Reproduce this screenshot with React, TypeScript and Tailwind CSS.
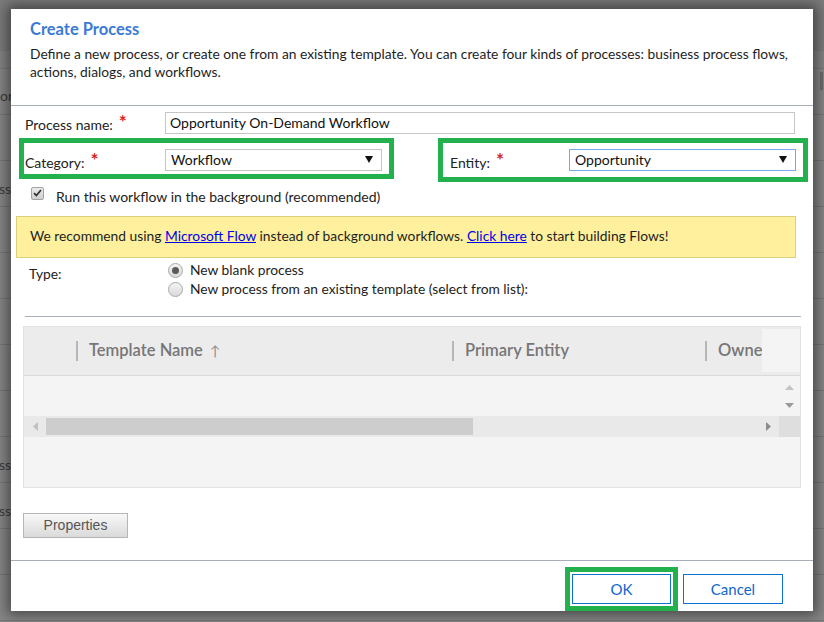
import React from 'react';

// Backdrop rows behind the modal (only the left/right edges show)
const backdropRows = [
  { text: '' },
  { text: 'ss' },
  { text: '' },
  { text: '' },
  { text: '' },
  { text: '' },
  { text: '' },
  { text: 'ss' },
  { text: 'ss' },
  { text: '' },
  { text: '' },
];

const Arrow: React.FC<{ dir: 'up' | 'down' | 'left' | 'right'; color: string; className?: string }> = ({ dir, color, className }) => {
  const pts = {
    up: '0,5 4.5,0 9,5',
    down: '0,0 9,0 4.5,5',
    left: '5,0 5,9 0,4.5',
    right: '0,0 5,4.5 0,9',
  }[dir];
  const vertical = dir === 'up' || dir === 'down';
  return (
    <svg width={vertical ? 9 : 5} height={vertical ? 5 : 9} viewBox={vertical ? '0 0 9 5' : '0 0 5 9'} className={className}>
      <polygon points={pts} fill={color} />
    </svg>
  );
};

const SelectBox: React.FC<{ value: string; width: string; focused?: boolean }> = ({ value, width, focused }) => (
  <div
    className={`${width} h-[22px] flex items-center justify-between pl-[5px] pr-[8px] border bg-white text-[14px] text-[#111] ${
      focused ? 'border-[#7aa7e8]' : 'border-[#c4c4c4]'
    }`}
  >
    <span>{value}</span>
    <svg width="8" height="7" viewBox="0 0 8 7">
      <polygon points="0,0 8,0 4,7" fill="#111" />
    </svg>
  </div>
);

const Required = () => (
  <span className="inline-block ml-[6px] mt-[1px] text-[19px] leading-[14px] align-top font-bold text-[#d42424]">*</span>
);

const Radio: React.FC<{ checked?: boolean }> = ({ checked }) => (
  <span className="w-[15px] h-[15px] rounded-full border border-[#a8a8a8] bg-gradient-to-b from-[#f4f4f4] to-[#d9d9d9] flex items-center justify-center">
    {checked && <span className="w-[7px] h-[7px] rounded-full bg-[#5a5a5a]" />}
  </span>
);

const GridColumn: React.FC<{ label: string; width: string; sortUp?: boolean }> = ({ label, width, sortUp }) => (
  <div className={`${width} flex items-center shrink-0`}>
    <span className="w-[2px] h-[20px] bg-[#b6b6b6]" />
    <span className="ml-[11px] text-[16.5px] font-semibold text-[#767676] whitespace-nowrap">
      {label}
      {sortUp && <span className="ml-[7px] text-[14px] font-normal text-[#8e8e8e]">↑</span>}
    </span>
  </div>
);

export default function App() {
  return (
    <div className="relative w-[824px] h-[622px] overflow-hidden bg-[#868686] font-['Lato',sans-serif]">
      {/* page behind the dialog */}
      <div className="flex flex-col">
        <div className="h-[51px] bg-[#7b7b7b]" />
        <div className="h-[18px] bg-[#838383] border-b border-[#777]" />
        <div className="h-[46px] border-b border-[#777] flex items-end pb-[8px] text-[14px] text-[#3c3c3c]">
          <span>or</span>
        </div>
        {backdropRows.map((row, i) => (
          <div key={i} className="h-[46px] border-b border-[#777] flex items-center pt-[10px] text-[14px] text-[#3c3c3c]">
            <span className="ml-[-1px]">{row.text}</span>
          </div>
        ))}
      </div>
      <div className="absolute right-[1px] top-[72px] w-[3px] h-[18px] bg-[#6c6c6c]" />

      {/* dialog */}
      <div className="absolute left-[11px] top-[9px] w-[802px] h-[602px] bg-white shadow-[0_0_12px_4px_rgba(0,0,0,0.45)] flex flex-col text-[#222]">
        {/* header */}
        <div className="h-[97px] border-b border-[#a7aeb7] pl-[19px] pr-[10px] pt-[10px]">
          <h1 className="text-[16.5px] leading-[21px] font-bold text-[#3b7ad4]">Create Process</h1>
          <p className="mt-[5px] text-[13.8px] leading-[18px] text-[#1e1e1e] whitespace-nowrap">
            Define a new process, or create one from an existing template. You can create four kinds of processes: business process flows,
            <br />
            actions, dialogs, and workflows.
          </p>
        </div>

        {/* process name */}
        <div className="mt-[6px] h-[22px] flex items-center pl-[14px]">
          <label className="w-[140px] text-[14px] pt-[3px]">
            Process name:
            <Required />
          </label>
          <div className="w-[630px] h-[22px] border border-[#c6c6c6] flex items-center pl-[4px] text-[14px] text-[#111]">
            Opportunity On-Demand Workflow
          </div>
        </div>

        {/* category / entity */}
        <div className="mt-[4px] flex items-start">
          <div className="ml-[8px] w-[375px] h-[41px] border-[5px] border-[#22b14c] flex items-start pt-[6px] pl-[1px]">
            <label className="w-[140px] text-[14px] pt-[3px]">
              Category:
              <Required />
            </label>
            <SelectBox value="Workflow" width="w-[217px]" />
          </div>
          <div className="ml-[44px] w-[370px] h-[44px] border-[5px] border-[#22b14c] flex items-start pt-[6px] pl-[7px]">
            <label className="w-[119px] text-[14px] pt-[3px]">
              Entity:
              <Required />
            </label>
            <SelectBox value="Opportunity" width="w-[227px]" focused />
          </div>
        </div>

        {/* background checkbox */}
        <div className="mt-[4px] pl-[20px] flex items-start">
          <span className="mt-[1px] w-[13px] h-[13px] rounded-[2px] border border-[#a3a3a3] bg-gradient-to-b from-[#ececec] to-[#cfcfcf] flex items-center justify-center">
            <svg width="9" height="8" viewBox="0 0 9 8">
              <path d="M1 4.2 L3.4 6.5 L8 1" stroke="#333" strokeWidth="1.8" fill="none" />
            </svg>
          </span>
          <span className="ml-[12px] mt-[2px] text-[14px] leading-[18px]">Run this workflow in the background (recommended)</span>
        </div>

        {/* recommendation banner */}
        <div className="mt-[10px] ml-[5px] w-[780px] h-[42px] border border-[#d8d07c] bg-[#fff09e] flex items-center pl-[13px] text-[13.8px] text-[#1e1e1e]">
          <span>
            We recommend using <a className="text-[#0000ee] underline">Microsoft Flow</a> instead of background workflows.{' '}
            <a className="text-[#0000ee] underline">Click here</a> to start building Flows!
          </span>
        </div>

        {/* type */}
        <div className="mt-[3px] pl-[18px] flex items-start">
          <span className="w-[139px] mt-[4px] text-[13.8px] leading-[18px]">Type:</span>
          <div className="flex flex-col">
            <div className="h-[19px] flex items-center gap-[7px] text-[13.8px]">
              <Radio checked />
              <span>New blank process</span>
            </div>
            <div className="h-[19px] flex items-center gap-[7px] text-[13.8px]">
              <Radio />
              <span>New process from an existing template (select from list):</span>
            </div>
          </div>
        </div>

        <div className="mt-[17px] ml-[14px] w-[776px] h-px bg-[#a9afb9]" />

        {/* template grid */}
        <div className="mt-[9px] ml-[12px] w-[778px] h-[163px] border border-[#e3e3e3] bg-[#f4f4f4] flex flex-col">
          <div className="relative h-[49px] bg-[#ececec] border-b border-[#dadada] flex items-center overflow-hidden">
            <div className="w-[52px] shrink-0" />
            <GridColumn label="Template Name" width="w-[376px]" sortUp />
            <GridColumn label="Primary Entity" width="w-[253px]" />
            <GridColumn label="Owner" width="w-[120px]" />
            <div className="absolute right-0 top-[2px] w-[38px] h-[43px] bg-[#f4f4f4]" />
          </div>
          <div className="h-[40px] flex justify-end">
            <div className="w-[21px] flex flex-col items-center pt-[9px] gap-[13px]">
              <Arrow dir="up" color="#c4c4c4" />
              <Arrow dir="down" color="#9a9a9a" />
            </div>
          </div>
          <div className="h-[21px] flex">
            <div className="flex-1 bg-[#e9e9e9] flex items-center pl-[9px] pr-[8px]">
              <Arrow dir="left" color="#c0c0c0" />
              <div className="ml-[8px] w-[427px] h-[17px] bg-[#cdcdcd]" />
              <div className="flex-1" />
              <Arrow dir="right" color="#8c8c8c" />
            </div>
            <div className="w-[21px] bg-[#dedede]" />
          </div>
        </div>

        {/* properties */}
        <div className="mt-[24px] ml-[12px]">
          <button className="w-[105px] h-[25px] border border-[#b6b6b6] bg-gradient-to-b from-[#f8f8f8] to-[#dadada] font-['Liberation_Sans',sans-serif] text-[14px] text-[#555]">
            Properties
          </button>
        </div>

        <div className="mt-[22px] h-px bg-[#a7aeb7]" />

        {/* footer buttons */}
        <div className="flex-1 flex justify-end items-start pt-[6px] pr-[30px]">
          <div className="border-[5px] border-[#22b14c] p-[2px]">
            <button className="w-[99px] h-[30px] border border-[#0b72d2] bg-white text-[15px] text-[#1166cc]">OK</button>
          </div>
          <button className="ml-[5px] mt-[7px] w-[100px] h-[30px] border border-[#0b72d2] bg-white text-[15px] text-[#1166cc]">
            Cancel
          </button>
        </div>
      </div>
    </div>
  );
}
